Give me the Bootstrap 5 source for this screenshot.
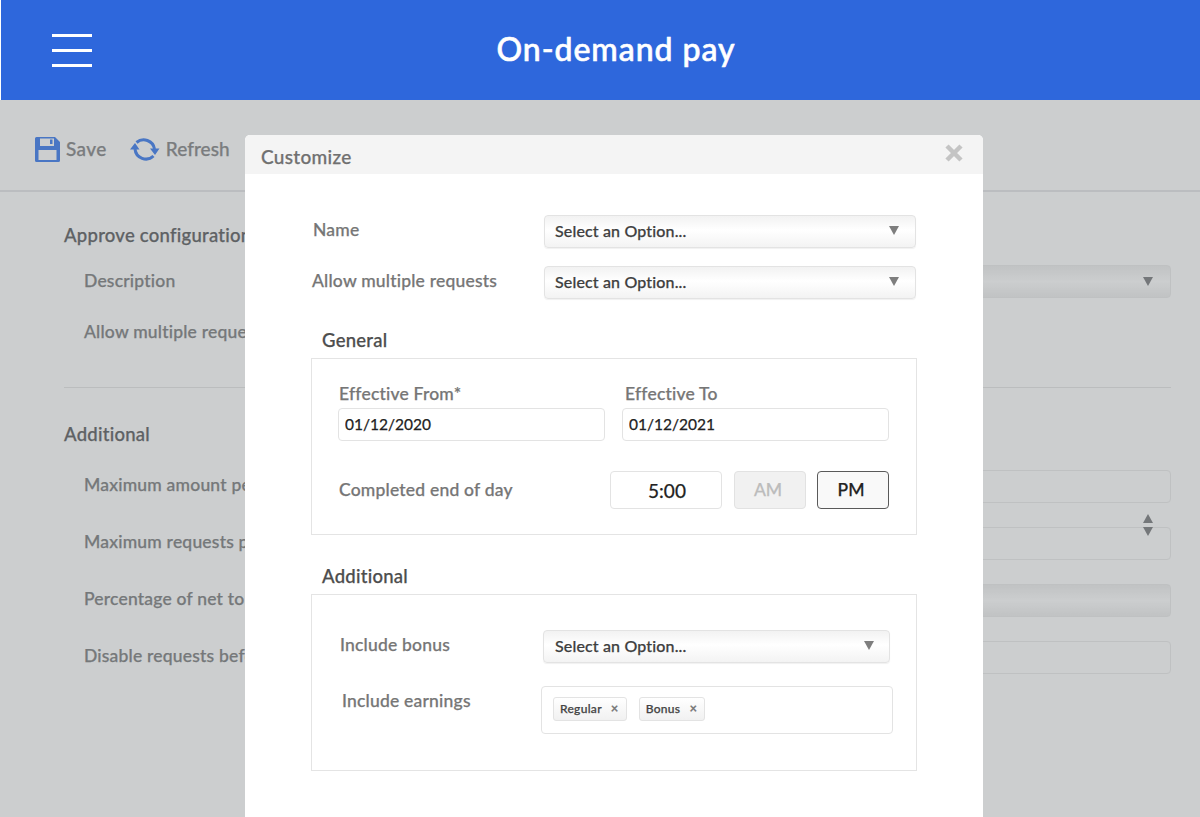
<!DOCTYPE html>
<html lang="en">
<head>
<meta charset="utf-8">
<title>On-demand pay</title>
<link href="https://cdn.jsdelivr.net/npm/bootstrap@5.3.0/dist/css/bootstrap.min.css" rel="stylesheet">
<style>
html,body{height:817px;overflow:hidden;background:#fff;}
body{font-family:"Lato","Liberation Sans",sans-serif;position:relative;color:#4a4a4a;font-size:16px;font-weight:500;-webkit-text-stroke:.25px currentColor;}
.topbar{height:100px;background:#2e67dc;margin-left:1px;position:relative;z-index:3;}
.burger{width:40px;margin-left:51px;display:flex;flex-direction:column;gap:12px;}
.burger i{display:block;height:3px;background:#fff;}
.apptitle{font-size:32px;font-weight:500;color:#fff;position:absolute;left:0;right:0;top:50%;transform:translateY(-50%);text-align:center;padding:0 0 1px 31px;margin:0;letter-spacing:.95px;-webkit-text-stroke:.6px #fff;}
.toolbar{height:92px;border-bottom:2px solid #eaeaec;padding:8px 0 0 35px;gap:23px;font-size:19px;color:#969798;letter-spacing:.4px;}
.tool{gap:6px;}
.tool-refresh{letter-spacing:.05px;}
.under{padding:31px 29px 0 64px;color:#7d7e80;}
.sect{font-size:18.500px;font-weight:500;color:#737476;line-height:24px;margin:0;letter-spacing:.25px;}
.urow{height:57px;padding-left:20px;font-size:17.500px;color:#909192;white-space:nowrap;letter-spacing:.2px;}
.addrows .urow>span:first-child{margin-top:-2px;}
.firstrow{margin-top:6px;}
.shortrow{height:45px;}
.addrows{margin-top:12px;}
.ufield{height:33px;width:622px;margin-left:auto;border:1px solid #efefef;border-radius:4px;background:#fff;flex:none;}
.ugrad{background:linear-gradient(#f1f1f1,#fff 50%,#f1f1f1);}
.spin{position:absolute;right:18px;width:0;height:0;border-left:5px solid transparent;border-right:5px solid transparent;}
.dn{border-top:9px solid #8f9092;}
.up{border-bottom:9px solid #8f9092;}
.spin-a{top:-1px;right:18px;}
.spin-b{top:12px;right:18px;}
.hrline{margin:32px 0 34px;border:0;border-top:1px solid #e9e9e9;opacity:1;}
.backdrop{position:absolute;left:0;right:0;top:100px;bottom:0;background:rgba(25,30,38,.22);z-index:1;}
.custom-modal{position:absolute;left:245px;top:135px;width:738px;height:682px;background:#fff;border-radius:5px 5px 0 0;z-index:2;overflow:hidden;}
.mhead{height:39px;background:#f4f4f4;padding:5px 20px 0 16px;font-size:19px;color:#707070;letter-spacing:.3px;}
.mhead svg{margin-top:-8px;}
.mbody{padding:41px 66px 0 66px;font-size:17.500px;color:#767676;letter-spacing:.2px;}
.frow{height:33px;margin:0 1px 18px 0;}
.flabel{width:233px;flex:none;padding-left:2px;margin-top:-2px;}
.flabel.tight{padding-left:1px;}
.pick{height:33px;border:1px solid #e3e3e3;border-radius:4px;background:linear-gradient(#f2f2f2,#fff 45%,#f3f3f3);padding:0 16px 2px 10px;font-size:16px;color:#3f3f3f;box-shadow:0 1px 1px rgba(0,0,0,.06);flex:1;letter-spacing:.15px;}
.tri{width:0;height:0;border-left:5px solid transparent;border-right:5px solid transparent;border-top:9px solid #7e7e7e;margin-top:0;}
.fhead{font-size:18.500px;font-weight:500;color:#4d4d4d;padding-left:11px;line-height:24px;margin:0 0 6px;letter-spacing:.25px;}
.spacer{height:11px;}
.fbox{border:1px solid #e4e4e4;height:177px;}
.genbox{padding:22px 27px 0 26px;margin-bottom:29px;}
.addbox{padding:35px 26px 0 28px;}
.addbox .pick{padding-right:15px;padding-left:11px;}
.dlabel{line-height:24px;padding:1px 0 0 1px;margin-bottom:2px;}
.dlabel.toplab{padding-left:3px;}
.form-control.dval{height:33px;border:1px solid #e3e3e3;border-radius:4px;padding:0 6px 2px;font-size:15.500px;color:#222;letter-spacing:0;}
.dates{gap:17px;}
.dates>div{width:267px;flex:none;}
.timerow{margin-top:30px;}
.timelab{padding-left:1px;}
.form-control.timebox{width:112px;height:38px;flex:none;margin-left:auto;border:1px solid #e3e3e3;border-radius:4px;font-size:19px;color:#222;padding:0 0 0 2px;text-align:center;}
.btn.ampm{width:72px;height:38px;padding:0 4px 0 0;font-size:17.500px;border-radius:4px;margin-left:12px;font-weight:500;}
.btn.ampm.off{background:#f1f1f1;border:1px solid #e2e2e2;color:#bcbcbc;}
.btn.ampm.onn{background:#f9f9f9;border:1.500px solid #5a5a5a;color:#222;margin-left:11px;}
.bonusrow{height:33px;}
.bonuslab{width:203px;flex:none;margin-top:-2px;}
.earnrow{margin-top:23px;margin-left:2px;}
.earnlab{width:199px;flex:none;margin-top:2px;}
.tagbox{width:352px;height:48px;flex:none;border:1px solid #e3e3e3;border-radius:4px;padding:10px 11px;gap:12px;}
.chip{height:24px;border:1px solid #e3e3e3;border-radius:3px;background:linear-gradient(#fff,#f1f1f1);font-size:12px;color:#444;padding:0 7px 0 6px;gap:9px;font-weight:500;letter-spacing:.3px;}
.chip b{color:#777;font-size:13px;}
</style>
</head>
<body>
<header class="topbar d-flex align-items-center">
  <div class="burger"><i></i><i></i><i></i></div>
  <h1 class="apptitle">On-demand pay</h1>
</header>

<div class="toolbar d-flex align-items-center">
  <div class="tool d-flex align-items-center">
    <svg width="25" height="25" viewBox="0 0 25 25"><path fill="#588ff1" fill-rule="evenodd" d="M1.500 0H20l5 5v18.500a1.500 1.500 0 0 1-1.500 1.500h-22A1.500 1.500 0 0 1 0 23.500V1.500A1.500 1.500 0 0 1 1.500 0zM5 1.500V9h14V1.500zM15 2.500h2.500V7H15zM3.500 13v10h18V13z"/></svg>
    <span>Save</span>
  </div>
  <div class="tool tool-refresh d-flex align-items-center">
    <svg width="30" height="26" viewBox="0 0 30 26"><g fill="none" stroke="#588ff1" stroke-width="3"><path d="M6.500 6.500A11 11 0 0 1 24.500 13"/><path d="M5 13A11 11 0 0 0 23.500 20"/></g><path fill="#588ff1" d="M0 13.500h9.500L5 7zM20 12.500h9.500L25 19z"/></svg>
    <span>Refresh</span>
  </div>
</div>

<main class="under">
  <h2 class="sect">Approve configuration</h2>
  <div class="urow firstrow d-flex align-items-center position-relative"><span>Description</span><div class="ufield ugrad"></div><span class="spin dn"></span></div>
  <div class="urow shortrow d-flex align-items-center"><span>Allow multiple requests</span></div>
  <hr class="hrline">
  <h2 class="sect">Additional</h2>
  <div class="addrows">
    <div class="urow d-flex align-items-center"><span>Maximum amount per request</span><div class="ufield"></div></div>
    <div class="urow d-flex align-items-center position-relative"><span>Maximum requests per period</span><div class="ufield"></div><span class="spin up spin-a"></span><span class="spin dn spin-b"></span></div>
    <div class="urow d-flex align-items-center"><span>Percentage of net to employee</span><div class="ufield ugrad"></div></div>
    <div class="urow d-flex align-items-center"><span>Disable requests before</span><div class="ufield"></div></div>
  </div>
</main>

<div class="backdrop"></div>

<section class="custom-modal">
  <div class="mhead d-flex align-items-center justify-content-between">
    <span>Customize</span>
    <svg width="18" height="18" viewBox="0 0 18 18"><path stroke="#c4c4c4" stroke-width="4.500" d="M2 2l14 14M16 2L2 16"/></svg>
  </div>
  <div class="mbody">
    <div class="frow d-flex align-items-center"><label class="flabel">Name</label><div class="pick d-flex align-items-center justify-content-between"><span>Select an Option...</span><span class="tri"></span></div></div>
    <div class="frow d-flex align-items-center"><label class="flabel tight">Allow multiple requests</label><div class="pick d-flex align-items-center justify-content-between"><span>Select an Option...</span><span class="tri"></span></div></div>
    <div class="spacer"></div>
    <h3 class="fhead">General</h3>
    <div class="fbox genbox">
      <div class="dates d-flex">
        <div><div class="dlabel">Effective From*</div><input class="form-control dval" value="01/12/2020"></div>
        <div><div class="dlabel toplab">Effective To</div><input class="form-control dval" value="01/12/2021"></div>
      </div>
      <div class="timerow d-flex align-items-center">
        <span class="timelab">Completed end of day</span>
        <input class="form-control timebox" value="5:00">
        <button class="btn ampm off" type="button">AM</button>
        <button class="btn ampm onn" type="button">PM</button>
      </div>
    </div>
    <h3 class="fhead">Additional</h3>
    <div class="fbox addbox">
      <div class="bonusrow d-flex align-items-center"><span class="bonuslab">Include bonus</span><div class="pick d-flex align-items-center justify-content-between"><span>Select an Option...</span><span class="tri"></span></div></div>
      <div class="earnrow d-flex align-items-start">
        <span class="earnlab">Include earnings</span>
        <div class="tagbox d-flex align-items-start">
          <span class="chip d-inline-flex align-items-center">Regular <b>×</b></span>
          <span class="chip d-inline-flex align-items-center">Bonus <b>×</b></span>
        </div>
      </div>
    </div>
  </div>
</section>
</body>
</html>
